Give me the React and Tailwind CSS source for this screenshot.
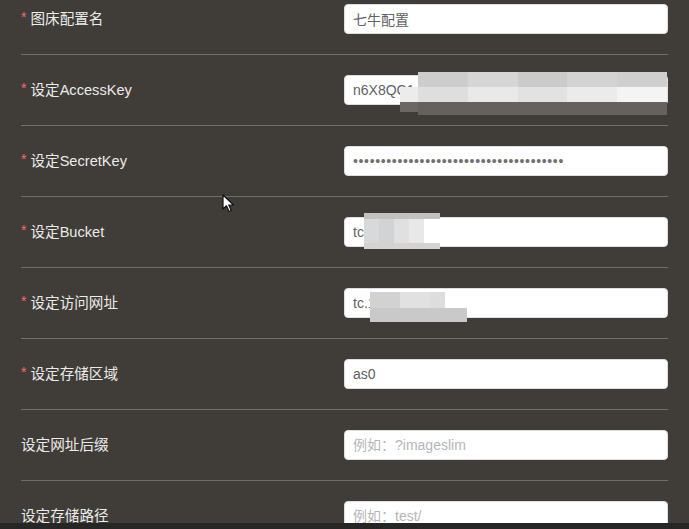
import React from 'react';

const rows = [
  { label: '图床配置名', required: true, value: '七牛配置' },
  { label: '设定AccessKey', required: true, value: 'n6X8QC1', mosaic: 'key' },
  { label: '设定SecretKey', required: true, value: '•'.repeat(38), password: true },
  { label: '设定Bucket', required: true, value: 'tc', mosaic: 'bucket' },
  { label: '设定访问网址', required: true, value: 'tc.1', mosaic: 'url' },
  { label: '设定存储区域', required: true, value: 'as0' },
  { label: '设定网址后缀', placeholder: '例如：?imageslim' },
  { label: '设定存储路径', placeholder: '例如：test/' },
];

// pixelated blur over the private values
const Mosaic = ({ kind }) => {
  if (kind === 'key') {
    return (
      <div className="absolute left-[56px] top-[-3px] w-[267px] h-[43px] flex flex-col">
        <div className="flex h-[15px] pl-[18px]">
          <div className="flex-1 bg-[#cdcdcd]" />
          <div className="flex-1 bg-[#d6d6d6]" />
          <div className="flex-1 bg-[#cbcbcb]" />
          <div className="flex-1 bg-[#d3d3d3]" />
          <div className="flex-1 bg-[#cfcfcf]" />
        </div>
        <div className="flex h-[15px]">
          <div className="w-[18px] bg-[#ececec]" />
          <div className="flex-1 bg-[#dedede]" />
          <div className="flex-1 bg-[#e9e9e9]" />
          <div className="flex-1 bg-[#e2e2e2]" />
          <div className="flex-1 bg-[#ebebeb]" />
          <div className="flex-1 bg-[#f4f4f4]" />
        </div>
        <div className="flex h-[13px]">
          <div className="w-[18px] h-[10px] bg-[#6b6863]" />
          <div className="flex-1 bg-[#65625d]" />
        </div>
      </div>
    );
  }
  if (kind === 'bucket') {
    return (
      <div className="absolute left-[20px] top-[-4px] w-[76px] h-[36px] flex flex-col">
        <div className="h-[6px] bg-[#c2c1bf]" />
        <div className="flex h-[24px]">
          <div className="w-[15px] bg-[#d9d9d9]" />
          <div className="w-[15px] bg-[#d2d3d5]" />
          <div className="w-[15px] bg-[#e0e0e0]" />
          <div className="w-[15px] bg-[#e8e8e8]" />
          <div className="flex-1 bg-white" />
        </div>
        <div className="h-[6px] bg-[#d4d3d2]" />
      </div>
    );
  }
  return (
    <div className="absolute left-[26px] top-[4px] w-[97px] h-[30px] flex flex-col">
      <div className="flex h-[16px] w-[75px]">
        <div className="w-[30px] bg-[#d2d2d2]" />
        <div className="w-[30px] bg-[#e1e1e1]" />
        <div className="flex-1 bg-[#dcdddc]" />
      </div>
      <div className="h-[14px] bg-[#c9c9c9]" />
    </div>
  );
};

const Cursor = () => (
  <svg className="absolute left-[222px] top-[194px]" width="14" height="20" viewBox="0 0 14 20">
    <path d="M1 1 L1 15 L4.5 11.8 L7 17.5 L9.2 16.5 L6.8 11 L11.5 11 Z" fill="#fff" stroke="#111" strokeWidth="1.2" strokeLinejoin="round" />
  </svg>
);

const App = () => {
  return (
    <div className="relative w-[689px] h-[529px] overflow-hidden flex flex-col bg-[#403c37] font-['Liberation_Sans','Noto_Sans_CJK_SC',sans-serif]">
      <div className="flex-1 overflow-hidden">
        <div className="mt-[-16px] ml-[21px] w-[647px]">
          {rows.map((row, i) => (
            <div key={i} className="flex items-center py-5 border-b border-[#716d68]">
              <div className="w-[323px] text-[14.6px] text-[#ebebeb] leading-[30px]">
                {row.required && <span className="text-[#f56c6c] text-[14px] mr-[4px] relative top-[-2px]">*</span>}
                {row.label}
              </div>
              <div className="relative flex-1">
                <input
                  readOnly
                  value={row.value || ''}
                  placeholder={row.placeholder}
                  className={`w-full h-[30px] bg-white rounded-[4px] border border-[#dcdfe6] px-[8px] text-[14px] outline-none placeholder:text-[#b4b6bb] ${row.password ? 'text-[#707070] text-[10px] tracking-[0.65px]' : 'text-[#606266]'}`}
                />
                {row.mosaic && <Mosaic kind={row.mosaic} />}
              </div>
            </div>
          ))}
        </div>
      </div>
      <div className="h-[6px] bg-[#262626]" />
      <Cursor />
    </div>
  );
};

export default App;
